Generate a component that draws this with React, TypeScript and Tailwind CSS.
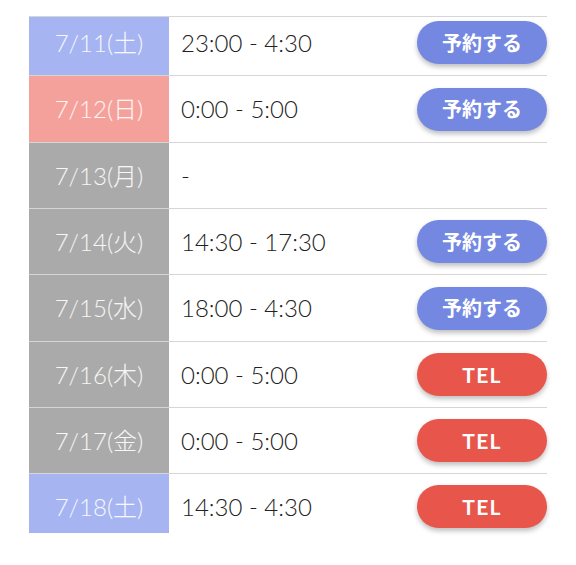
import React from "react";

type Row = {
  date: string;
  kind: "sat" | "sun" | "day";
  time: string;
  action: "reserve" | "tel" | null;
  h: string;
  pad: string;
};

const rows: Row[] = [
  { date: "7/11(土)", kind: "sat", time: "23:00 - 4:30", action: "reserve", h: "h-[59px]", pad: "pb-[7px]" },
  { date: "7/12(日)", kind: "sun", time: "0:00 - 5:00", action: "reserve", h: "h-[67px]", pad: "" },
  { date: "7/13(月)", kind: "day", time: "-", action: null, h: "h-[66px]", pad: "" },
  { date: "7/14(火)", kind: "day", time: "14:30 - 17:30", action: "reserve", h: "h-[66px]", pad: "" },
  { date: "7/15(水)", kind: "day", time: "18:00 - 4:30", action: "reserve", h: "h-[67px]", pad: "" },
  { date: "7/16(木)", kind: "day", time: "0:00 - 5:00", action: "tel", h: "h-[66px]", pad: "" },
  { date: "7/17(金)", kind: "day", time: "0:00 - 5:00", action: "tel", h: "h-[66px]", pad: "" },
  { date: "7/18(土)", kind: "sat", time: "14:30 - 4:30", action: "tel", h: "h-[60px]", pad: "pt-[6px]" },
];

const cellColor = {
  sat: "bg-[#a6b4f1]",
  sun: "bg-[#f5a19b]",
  day: "bg-[#aaaaaa]",
};

export default function App() {
  return (
    <div className="h-[565px] w-[576px] bg-white pt-[16px] pl-[29px] pr-[29px] font-['Lato','Noto_Sans_CJK_JP',sans-serif]">
      <div className="flex flex-col">
        {rows.map((r) => (
          <div key={r.date} className={`flex border-t border-[#d6d6d6] ${r.h}`}>
            <div
              className={`flex w-[140px] items-center justify-center text-[24px] font-light text-white/90 ${cellColor[r.kind]} ${r.pad}`}
            >
              {r.date}
            </div>
            <div className={`flex flex-1 items-center justify-between pl-[12px] ${r.pad}`}>
              <span className="text-[24px] font-light text-[#222222]">{r.time}</span>
              {r.action === "reserve" && (
                <button className="h-[43px] w-[130px] rounded-full bg-[#7488e1] text-[20px] font-bold text-white shadow-[0_3px_5px_rgba(0,0,0,0.25)]">
                  予約する
                </button>
              )}
              {r.action === "tel" && (
                <button className="h-[43px] w-[130px] rounded-full bg-[#e8554a] text-[21px] font-bold tracking-[0.06em] text-white shadow-[0_3px_5px_rgba(0,0,0,0.25)]">
                  TEL
                </button>
              )}
            </div>
          </div>
        ))}
      </div>
    </div>
  );
}
